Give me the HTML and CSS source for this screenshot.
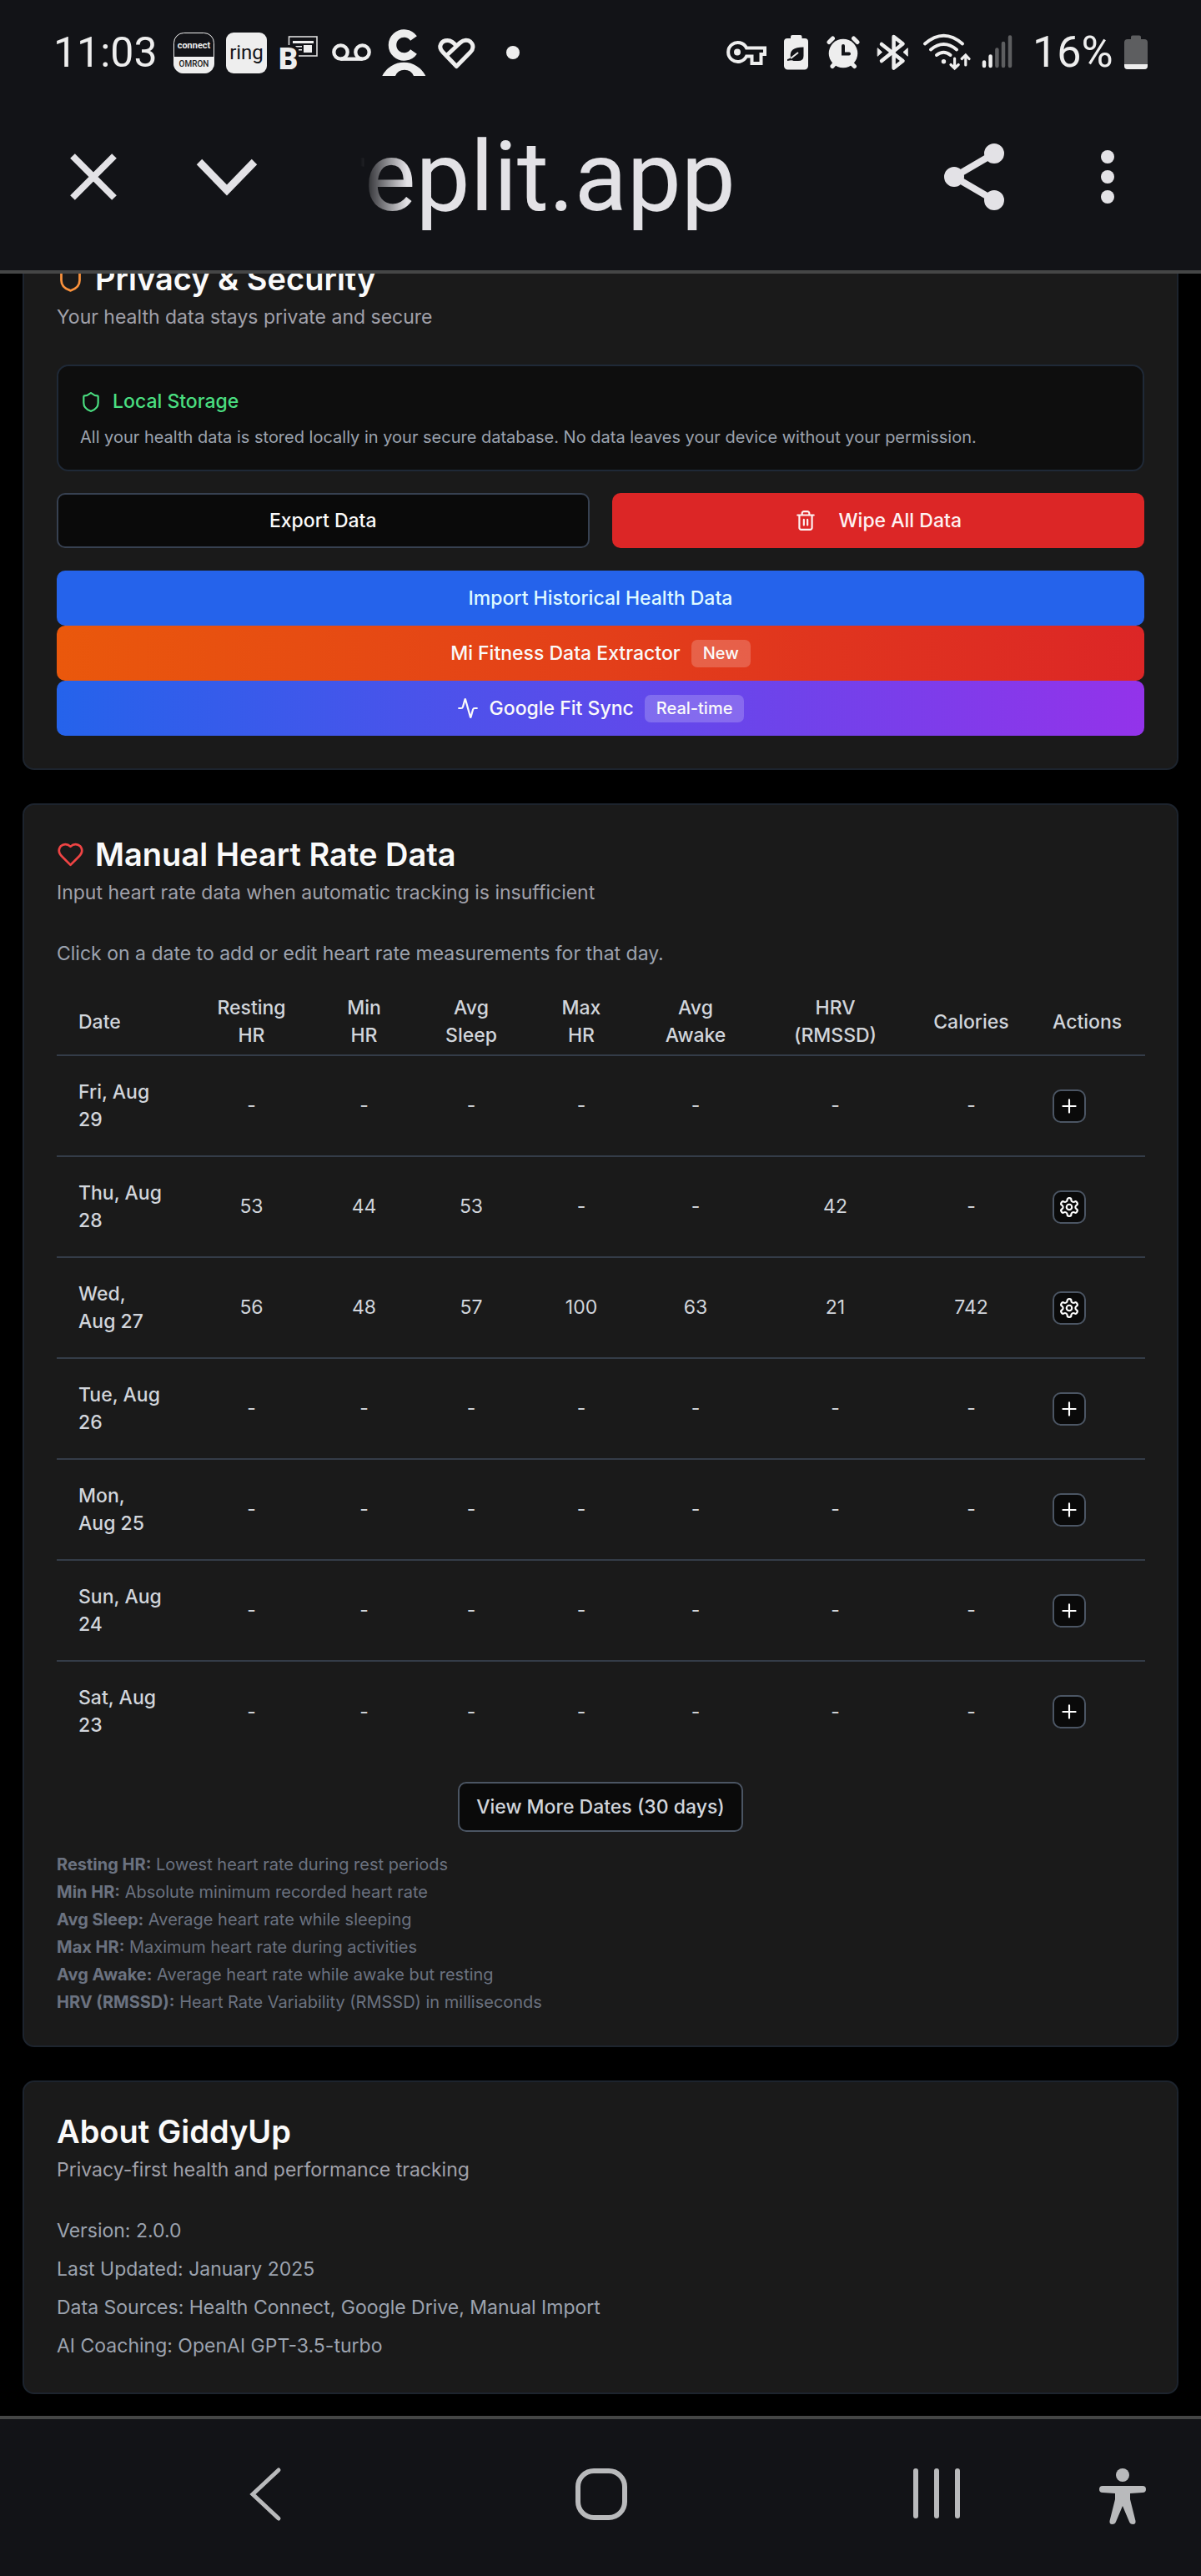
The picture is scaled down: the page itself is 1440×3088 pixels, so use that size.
FILE: index.html
```html
<!DOCTYPE html>
<html lang="en">
<head>
<meta charset="utf-8">
<meta name="viewport" content="width=device-width, initial-scale=1">
<title>GiddyUp – Settings</title>
<link rel="stylesheet" href="styles.css">
</head>
<body>
<svg class="defs" aria-hidden="true">
  <symbol id="shield" viewBox="0 0 24 24"><path d="M20 13c0 5-3.500 7.500-7.660 8.950a1 1 0 0 1-.67-.01C7.500 20.500 4 18 4 13V6a1 1 0 0 1 1-1c2 0 4.500-1.200 6.240-2.720a1.170 1.170 0 0 1 1.520 0C14.510 3.810 17 5 19 5a1 1 0 0 1 1 1z"/></symbol>
  <symbol id="heart" viewBox="0 0 24 24"><path d="M19 14c1.490-1.460 3-3.210 3-5.500A5.500 5.500 0 0 0 16.500 3c-1.760 0-3 .5-4.500 2-1.500-1.500-2.740-2-4.500-2A5.500 5.500 0 0 0 2 8.500c0 2.300 1.500 4.050 3 5.500l7 7Z"/></symbol>
  <symbol id="trash" viewBox="0 0 24 24"><path d="M3 6h18M19 6v14c0 1-1 2-2 2H7c-1 0-2-1-2-2V6M8 6V4c0-1 1-2 2-2h4c1 0 2 1 2 2v2M10 11v6M14 11v6"/></symbol>
  <symbol id="activity" viewBox="0 0 24 24"><path d="M22 12h-2.480a2 2 0 0 0-1.930 1.460l-2.350 8.360a.25.25 0 0 1-.48 0L9.240 2.180a.25.25 0 0 0-.48 0l-2.350 8.360A2 2 0 0 1 4.490 12H2"/></symbol>
  <symbol id="plus" viewBox="0 0 24 24"><path d="M5 12h14M12 5v14"/></symbol>
  <symbol id="gear" viewBox="0 0 24 24"><path d="M12.220 2h-.44a2 2 0 0 0-2 2v.18a2 2 0 0 1-1 1.730l-.43.25a2 2 0 0 1-2 0l-.15-.08a2 2 0 0 0-2.730.73l-.22.38a2 2 0 0 0 .73 2.730l.15.1a2 2 0 0 1 1 1.720v.51a2 2 0 0 1-1 1.740l-.15.09a2 2 0 0 0-.73 2.730l.22.38a2 2 0 0 0 2.730.73l.15-.08a2 2 0 0 1 2 0l.43.25a2 2 0 0 1 1 1.730V20a2 2 0 0 0 2 2h.44a2 2 0 0 0 2-2v-.18a2 2 0 0 1 1-1.730l.43-.25a2 2 0 0 1 2 0l.15.08a2 2 0 0 0 2.730-.73l.22-.39a2 2 0 0 0-.73-2.730l-.15-.08a2 2 0 0 1-1-1.740v-.5a2 2 0 0 1 1-1.740l.15-.09a2 2 0 0 0 .73-2.730l-.22-.38a2 2 0 0 0-2.730-.73l-.15.08a2 2 0 0 1-2 0l-.43-.25a2 2 0 0 1-1-1.730V4a2 2 0 0 0-2-2z"/><circle cx="12" cy="12" r="3"/></symbol>
</svg>

<header class="chrome">
  <div class="status">
    <span class="status-text clock">11:03</span>
    <div class="status-group status-left">
      <svg class="slot-left" viewBox="0 0 63 70"><rect x="7.500" y="11.500" width="48" height="48" rx="12" fill="#121317" stroke="#eee"/><path d="M7 40H56V48A12 12 0 0 1 44 60H19A12 12 0 0 1 7 48Z" fill="#eee"/><text x="31.500" y="30" class="logo-connect">connect</text><text x="31.500" y="52" class="logo-omron">OMRON</text></svg>
      <svg class="slot-left" viewBox="0 0 63 70"><rect x="7" y="11" width="49" height="49" rx="9" fill="#eee"/><text x="31.500" y="43" class="logo-ring">ring</text></svg>
      <svg class="slot-left" viewBox="0 0 63 70"><rect x="19.500" y="16" width="33.500" height="23" fill="none" stroke="#ddd" stroke-width="1.600"/><path d="M24 21H49V24H24ZM37 26H47V35H37ZM25 27H35V28.500H25ZM30 31H35V32.500H30Z" fill="#eee"/><path d="M7 26H26L31 31V57H7Z" fill="#121317"/><text x="7" y="55" class="logo-b">B</text></svg>
      <svg class="slot-left" viewBox="0 0 63 70" fill="none" stroke="#eee" stroke-width="4.300"><circle cx="18.500" cy="34.500" r="8.200"/><circle cx="44.500" cy="34.500" r="8.200"/><path d="M18.500 42.700H44.500"/></svg>
      <svg class="slot-left" viewBox="0 0 63 70"><path d="M43 18A14 14 0 1 0 43 34" fill="none" stroke="#eee" stroke-width="9.500"/><path d="M36 22H52V29H36Z" fill="#121317"/><path d="M5.300 63A29 29 0 0 1 57.300 63H43A12 12 0 0 0 21 63Z" fill="#eee"/></svg>
      <svg class="slot-left" viewBox="0 0 63 70" fill="none" stroke="#eee" stroke-width="5" stroke-linejoin="round"><path d="M31.300 51.500L15 34.500C8 27 14 20.500 20.500 20.500C25.500 20.500 28 23.500 31.300 27L36 23C40 19.500 45 19.500 48 22C52.500 26 51.500 31 48 34.500ZM20 38L36 23"/></svg>
      <svg class="slot-left" viewBox="0 0 63 70"><circle cx="36" cy="35" r="8" fill="#eee"/></svg>
    </div>
    <div class="status-group">
      <svg class="slot" viewBox="0 0 60 70" fill="none" stroke="#eee" stroke-width="4"><path d="M31 29.500H53V37H48.500V48H37.500V39.500H31A11.500 11.500 0 1 1 31 29.500Z"/><circle cx="20" cy="34.500" r="4" fill="#eee" stroke="none"/></svg>
      <svg class="slot" viewBox="0 0 60 70"><path d="M24 18V16A2 2 0 0 1 26 14H35.500A2 2 0 0 1 37.500 16V18H41A4 4 0 0 1 45 22V51A4.500 4.500 0 0 1 40.500 55.500H20.500A4.500 4.500 0 0 1 16 51V22A4 4 0 0 1 20 18Z" fill="#eee"/><path d="M39.500 28.500V39Q39.500 45 33 45H27.500Q26 43.500 20 45L20 43Q23 42.500 24 40.500Q21.500 28.500 39.500 28.500Z" fill="#121317"/><path d="M24 42L33 35" stroke="#eee" stroke-width="2"/></svg>
      <svg class="slot" viewBox="0 0 60 70" fill="none" stroke="#eee" stroke-width="5" stroke-linecap="round"><circle cx="27" cy="36" r="17.300" fill="#eee" stroke="none"/><path d="M10 22.500L14.500 18M39.500 18L44 22.500M14 51.500L17 48M40.500 51.500L37 48"/><path d="M27 27V36.500H34" stroke="#121317" stroke-width="4"/></svg>
      <svg class="slot" viewBox="0 0 60 70" fill="none" stroke="#eee" stroke-width="4.500" stroke-linecap="round" stroke-linejoin="round"><path d="M13 25L38.500 45L27.600 53.500V16L38.500 24.500L13 45"/><path d="M8.500 30L13.500 34.500L8.500 39ZM44 30L39 34.500L44 39Z" fill="#eee" stroke-width="1"/></svg>
      <svg class="slot" viewBox="0 0 60 70" fill="none" stroke="#eee" stroke-width="4" stroke-linecap="round"><path d="M5 24.500Q27.500 5 50 24.500M12 31.500Q27.500 18.500 43 31.500M19 38Q27.500 31.500 35.500 38"/><circle cx="27.500" cy="45.700" r="2.700" fill="#eee" stroke="none"/><path d="M40.600 42V54M36 49.500L40.600 54L45.200 49.500M53.800 50V38.500M49.200 42.500L53.800 38L58 42.500" stroke-width="3.200"/></svg>
      <svg class="slot" viewBox="0 0 60 70" fill="none" stroke-width="4.500" stroke-linecap="round"><path d="M16 46.500V51M23.600 39.500V51" stroke="#eee"/><path d="M31.400 31.500V51M39 24V51M47 16.500V51" stroke="#5d5e60"/></svg>
      <span class="status-text battery-text">16%</span>
      <svg class="slot-battery" viewBox="0 0 44 70"><path d="M16 19V16.500A2 2 0 0 1 18 14.500H26A2 2 0 0 1 28 16.500V19H32A4 4 0 0 1 36 23V51A4 4 0 0 1 32 55H12A4 4 0 0 1 8 51V23A4 4 0 0 1 12 19Z" fill="#5d5e60"/><path d="M8 49H36V51A4 4 0 0 1 32 55H12A4 4 0 0 1 8 51Z" fill="#eee"/></svg>
    </div>
  </div>
  <div class="toolbar">
    <button class="tool" aria-label="Close"><svg viewBox="0 0 160 100" fill="none" stroke="#e3e2e6" stroke-width="8"><path d="M55 25L105 75M105 25L55 75"/></svg></button>
    <button class="tool" aria-label="Minimize"><svg viewBox="0 0 160 100" fill="none" stroke="#e3e2e6" stroke-width="9"><path d="M47 32L80 66L113 32"/></svg></button>
    <div class="address"><span>replit.app</span></div>
    <button class="tool" aria-label="Share"><svg viewBox="0 0 160 100" fill="#e3e2e6" stroke="#e3e2e6" stroke-width="8"><path d="M104 22L56 50L104 78" fill="none"/><circle cx="104" cy="22" r="8"/><circle cx="56" cy="50" r="8"/><circle cx="104" cy="78" r="8"/></svg></button>
    <button class="tool" aria-label="More options"><svg viewBox="0 0 160 100" fill="#e3e2e6"><circle cx="80" cy="26" r="8"/><circle cx="80" cy="50" r="8"/><circle cx="80" cy="74" r="8"/></svg></button>
  </div>
</header>

<main class="page">
  <section class="card card-scrolled">
    <h2><svg class="icon-lg orange"><use href="#shield"/></svg>Privacy &amp; Security</h2>
    <p class="desc">Your health data stays private and secure</p>
    <div class="card-body">
      <div class="notice">
        <h3><svg class="icon"><use href="#shield"/></svg>Local Storage</h3>
        <p>All your health data is stored locally in your secure database. No data leaves your device without your permission.</p>
      </div>
      <div class="pair">
        <button class="btn btn-outline">Export Data</button>
        <button class="btn btn-danger"><svg class="icon"><use href="#trash"/></svg>Wipe All Data</button>
      </div>
      <div class="stack">
        <button class="btn btn-import">Import Historical Health Data</button>
        <button class="btn btn-mi">Mi Fitness Data Extractor<span class="badge">New</span></button>
        <button class="btn btn-fit"><svg class="icon"><use href="#activity"/></svg>Google Fit Sync<span class="badge">Real-time</span></button>
      </div>
    </div>
  </section>

  <section class="card">
    <h2><svg class="icon-lg red"><use href="#heart"/></svg>Manual Heart Rate Data</h2>
    <p class="desc">Input heart rate data when automatic tracking is insufficient</p>
    <div class="card-body">
      <p class="muted">Click on a date to add or edit heart rate measurements for that day.</p>
      <table class="rates">
        <colgroup><col class="c-date"><col class="c-rest"><col class="c-min"><col class="c-sleep"><col class="c-max"><col class="c-awake"><col class="c-hrv"><col class="c-cal"><col class="c-act"></colgroup>
        <thead>
          <tr><th>Date</th><th>Resting HR</th><th>Min<br>HR</th><th>Avg Sleep</th><th>Max HR</th><th>Avg Awake</th><th>HRV (RMSSD)</th><th>Calories</th><th>Actions</th></tr>
        </thead>
        <tbody>
          <tr><th scope="row">Fri, Aug 29</th><td>-</td><td>-</td><td>-</td><td>-</td><td>-</td><td>-</td><td>-</td><td><button class="mini" aria-label="Add Aug 29"><svg class="icon"><use href="#plus"/></svg></button></td></tr>
          <tr><th scope="row">Thu, Aug 28</th><td>53</td><td>44</td><td>53</td><td>-</td><td>-</td><td>42</td><td>-</td><td><button class="mini" aria-label="Edit Aug 28"><svg class="icon"><use href="#gear"/></svg></button></td></tr>
          <tr><th scope="row">Wed, Aug&nbsp;27</th><td>56</td><td>48</td><td>57</td><td>100</td><td>63</td><td>21</td><td>742</td><td><button class="mini" aria-label="Edit Aug 27"><svg class="icon"><use href="#gear"/></svg></button></td></tr>
          <tr><th scope="row">Tue, Aug 26</th><td>-</td><td>-</td><td>-</td><td>-</td><td>-</td><td>-</td><td>-</td><td><button class="mini" aria-label="Add Aug 26"><svg class="icon"><use href="#plus"/></svg></button></td></tr>
          <tr><th scope="row">Mon, Aug&nbsp;25</th><td>-</td><td>-</td><td>-</td><td>-</td><td>-</td><td>-</td><td>-</td><td><button class="mini" aria-label="Add Aug 25"><svg class="icon"><use href="#plus"/></svg></button></td></tr>
          <tr><th scope="row">Sun, Aug 24</th><td>-</td><td>-</td><td>-</td><td>-</td><td>-</td><td>-</td><td>-</td><td><button class="mini" aria-label="Add Aug 24"><svg class="icon"><use href="#plus"/></svg></button></td></tr>
          <tr><th scope="row">Sat, Aug 23</th><td>-</td><td>-</td><td>-</td><td>-</td><td>-</td><td>-</td><td>-</td><td><button class="mini" aria-label="Add Aug 23"><svg class="icon"><use href="#plus"/></svg></button></td></tr>
        </tbody>
      </table>
      <button class="btn btn-more">View More Dates (30 days)</button>
      <ul class="legend">
        <li><strong>Resting HR:</strong> Lowest heart rate during rest periods</li>
        <li><strong>Min HR:</strong> Absolute minimum recorded heart rate</li>
        <li><strong>Avg Sleep:</strong> Average heart rate while sleeping</li>
        <li><strong>Max HR:</strong> Maximum heart rate during activities</li>
        <li><strong>Avg Awake:</strong> Average heart rate while awake but resting</li>
        <li><strong>HRV (RMSSD):</strong> Heart Rate Variability (RMSSD) in milliseconds</li>
      </ul>
    </div>
  </section>

  <section class="card">
    <h2>About GiddyUp</h2>
    <p class="desc">Privacy-first health and performance tracking</p>
    <div class="card-body about">
      <p class="muted">Version: 2.0.0</p>
      <p class="muted">Last Updated: January 2025</p>
      <p class="muted">Data Sources: Health Connect, Google Drive, Manual Import</p>
      <p class="muted">AI Coaching: OpenAI GPT-3.5-turbo</p>
    </div>
  </section>
</main>

<nav class="navbar">
  <div class="nav-main">
    <button class="nav-btn" aria-label="Back"><svg viewBox="0 0 120 80" fill="none" stroke="#b9babc" stroke-width="5" stroke-linecap="round"><path d="M76 11L45 40L76 69"/></svg></button>
    <button class="nav-btn" aria-label="Home"><svg viewBox="0 0 120 80" fill="none" stroke="#b9babc" stroke-width="6"><rect x="32" y="12" width="56" height="56" rx="19"/></svg></button>
    <button class="nav-btn" aria-label="Recent apps"><svg viewBox="0 0 120 80" fill="none" stroke="#b9babc" stroke-width="6" stroke-linecap="round"><path d="M35 12V66M60 12V66M85 12V66"/></svg></button>
  </div>
  <button class="nav-btn" aria-label="Accessibility"><svg viewBox="0 0 120 80" fill="#b9babc"><circle cx="60" cy="17" r="8"/><path d="M36 30H84Q88 30 88 34T84 38L69 39V46L75.500 72Q76 76 72.500 76Q69 76 68 73L60 54L52 73Q51 76 47.500 76Q44 76 44.500 72L51 46V39L36 38Q32 38 32 34T36 30Z"/></svg></button>
</nav>
</body>
</html>
```
FILE: styles.css
```css
* { box-sizing: border-box; }

body {
  margin: 0;
  background: #000;
  color: #fafafa;
  font-family: Inter, "Liberation Sans", sans-serif;
  font-size: 23px;
  line-height: 33px;
}

h2, h3, p, ul { margin: 0; }
button { font: inherit; color: inherit; cursor: pointer; }
.defs { display: none; }

/* Phone status bar and browser toolbar */
.chrome {
  background: #121317;
  border-bottom: 4px solid #454646;
  padding-bottom: 12px;
  font-family: Roboto, "Liberation Sans", sans-serif;
}
.status {
  display: flex;
  align-items: center;
  height: 112px;
  padding: 14px 56px 0 64px;
}
.status-text { color: #eee; font-size: 52px; line-height: 64px; }
.clock { width: 137px; font-size: 50px; }
.battery-text { width: 102px; margin-left: 14px; }
.status-group { display: flex; align-items: center; }
.status-left { margin-right: auto; }
.slot-left { width: 63px; height: 70px; }
.slot { width: 60px; height: 70px; }
.slot-battery { width: 44px; height: 70px; }
.logo-connect { font: 700 11px Roboto, sans-serif; fill: #eee; text-anchor: middle; }
.logo-omron { font: 500 10px Roboto, sans-serif; fill: #222; text-anchor: middle; }
.logo-ring { font: 400 24px Roboto, sans-serif; fill: #121317; text-anchor: middle; }
.logo-b { font: 900 36px Roboto, sans-serif; fill: #eee; }

.toolbar { display: flex; align-items: center; height: 200px; padding: 0 32px; }
.tool { width: 160px; height: 100px; padding: 0; border: 0; background: none; }
.tool svg, .nav-btn svg { display: block; width: 100%; height: 100%; }
.address {
  display: flex;
  justify-content: flex-end;
  width: 450px;
  margin: 0 auto 0 80px;
  overflow: hidden;
  color: #e3e2e6;
  font-size: 116px;
  line-height: 152px;
  mask-image: linear-gradient(to right, transparent, #000 56px);
}

/* Cards */
.page {
  display: flex;
  flex-direction: column;
  gap: 40px;
  padding: 0 27px 26px;
  overflow: hidden;
}
.card {
  padding: 39px;
  border: 2px solid #1d242e;
  border-radius: 14px;
  background: #1a1a1a;
}
/* The page is scrolled so this card starts behind the toolbar. */
.card-scrolled { margin-top: -55px; }
.card h2 {
  display: flex;
  align-items: center;
  gap: 13px;
  font-size: 38px;
  font-weight: 600;
  line-height: 40px;
}
.desc { margin-top: 10px; color: #a1a1aa; }
.muted { color: #9ca3af; }
.card-body { margin-top: 40px; }

.icon, .icon-lg {
  flex: none;
  fill: none;
  stroke: currentColor;
  stroke-width: 2;
  stroke-linecap: round;
  stroke-linejoin: round;
}
.icon { width: 26px; height: 26px; }
.icon-lg { width: 33px; height: 33px; }
.orange { color: #fb923c; }
.red { color: #ef4444; }

.notice {
  padding: 26px;
  border: 2px solid #1f2937;
  border-radius: 14px;
  background: #0e0e0e;
}
.notice h3 {
  display: flex;
  align-items: center;
  gap: 13px;
  color: #4ade80;
  font-size: 23px;
  font-weight: 500;
}
.notice p { margin-top: 13px; color: #9ca3af; font-size: 20px; line-height: 26px; }

.btn {
  display: flex;
  align-items: center;
  justify-content: center;
  gap: 13px;
  height: 66px;
  padding: 0 20px;
  border: 0;
  border-radius: 10px;
  font-weight: 500;
}
.pair { display: grid; grid-template-columns: 1fr 1fr; gap: 27px; margin-top: 26px; }
.stack { display: grid; margin-top: 27px; }
.btn-outline { border: 2px solid #374151; background: #0a0a0a; }
.btn-danger { gap: 27px; background: #dc2626; color: #fef2f2; }
.btn-import { background: #2563eb; color: #dffaff; }
.btn-mi { background: linear-gradient(to right, #ea580c, #dc2626); }
.btn-fit { background: linear-gradient(to right, #2563eb, #9333ea); }
.badge {
  padding: 0 14px;
  border-radius: 7px;
  background: rgba(255, 255, 255, .2);
  font-size: 20px;
}

/* Heart rate table */
.rates {
  width: 100%;
  margin-top: 26px;
  border-collapse: collapse;
  table-layout: fixed;
  color: #d1d5db;
}
.c-date { width: 156px; }
.c-rest { width: 155px; }
.c-min { width: 115px; }
.c-sleep { width: 142px; }
.c-max { width: 122px; }
.c-awake { width: 152px; }
.c-hrv { width: 183px; }
.c-cal { width: 143px; }
.c-act { width: 137px; }
.rates th, .rates td { height: 121px; padding: 0 26px; text-align: center; }
.rates th { font-weight: 500; }
.rates thead th { height: 79px; }
.rates tr > :first-child, .rates tr > :last-child { text-align: left; }
.rates tr { border-bottom: 2px solid #343c48; }
.rates tbody tr:last-child { border-bottom: 0; }
.mini {
  display: grid;
  place-items: center;
  width: 40px;
  height: 40px;
  padding: 0;
  border: 2px solid #4b5563;
  border-radius: 10px;
  background: #0a0a0a;
  color: #fff;
}
.btn-more {
  height: 60px;
  margin: 24px auto 0;
  border: 2px solid #4b5563;
  background: #0a0a0a;
  color: #d1d5db;
}
.legend {
  display: grid;
  gap: 7px;
  margin-top: 26px;
  padding: 0;
  list-style: none;
  color: #6b7280;
  font-size: 20px;
  line-height: 26px;
}
.legend strong { font-weight: 700; }
.about { display: grid; gap: 13px; }

/* System navigation */
.navbar {
  display: flex;
  align-items: center;
  gap: 103px;
  height: 192px;
  padding: 0 34px 8px 258px;
  border-top: 4px solid #454646;
  background: #121317;
}
.nav-main { display: flex; flex: 1; justify-content: space-between; }
.nav-btn { width: 120px; height: 80px; padding: 0; border: 0; background: none; }
```
